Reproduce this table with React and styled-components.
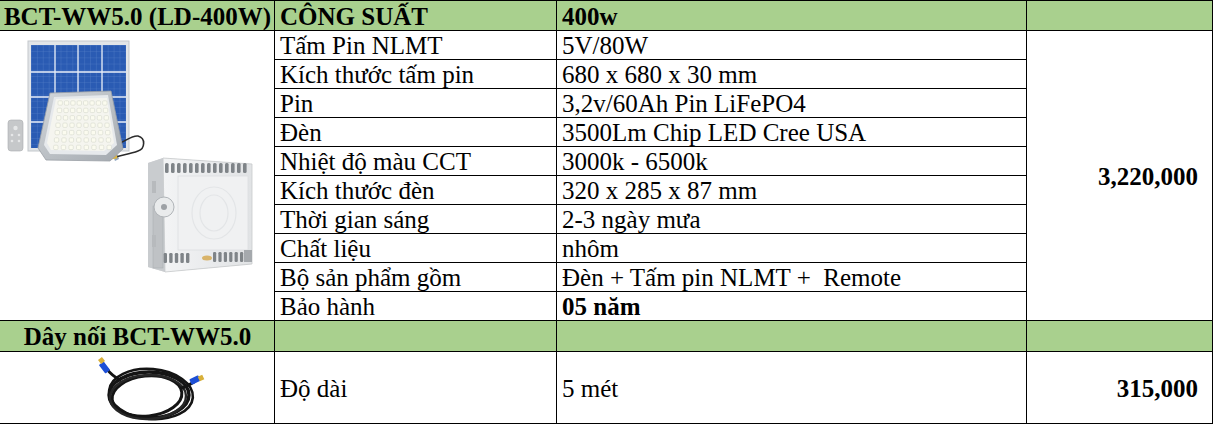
import React from "react";
import styled, { createGlobalStyle } from "styled-components";

const GlobalStyle = createGlobalStyle`
  html, body { margin: 0; padding: 0; background: #fff; }
  body { font-family: "Liberation Serif", "Times New Roman", serif; color: #000; }
`;

const Sheet = styled.div`
  display: grid;
  width: 1213px;
  grid-template-columns: 275px 282px 470px 186px;
  grid-template-rows: 30px repeat(10, 29px) 31px 72px;
  border-top: 1px solid #000;
`;

const justify = { left: "flex-start", center: "center", right: "flex-end" };

const Cell = styled.div`
  box-sizing: border-box;
  display: flex;
  align-items: center;
  justify-content: ${(p) => justify[p.$align || "left"]};
  padding: 1px ${(p) => (p.$align === "right" ? "14px" : "4px")} 0 5px;
  border-right: 1px solid #000;
  border-bottom: 1px solid #000;
  background: ${(p) => (p.$green ? "#a9d08e" : "#fff")};
  font-size: 25px;
  line-height: 1;
  font-weight: ${(p) => (p.$bold ? 700 : 400)};
  white-space: pre;
  overflow: hidden;
  grid-row: ${(p) => p.$row || "auto"};
  grid-column: ${(p) => p.$col || "auto"};
`;

const PictureCell = styled.div`
  box-sizing: border-box;
  grid-row: ${(p) => p.$row};
  grid-column: 1;
  border-right: 1px solid #000;
  border-bottom: 1px solid #000;
  overflow: hidden;
`;

const Drawing = styled.svg`
  display: block;
  width: 274px;
  height: ${(p) => p.$h}px;
`;

const Strong = styled.span`
  font-weight: 700;
`;

function SolarKit() {
  const dots = [];
  for (let r = 0; r < 7; r++) {
    for (let c = 0; c < 8; c++) {
      const t = r / 6;
      const x0 = 57 - t * 5;
      const x1 = 108 + t * 5;
      const x = x0 + ((x1 - x0) * (c + 0.5)) / 8;
      const y = 72 + r * 7.4;
      dots.push(<rect key={`${r}-${c}`} x={x - 2.2} y={y - 2.2} width={4.4} height={4.4} rx={1.1} fill="#fbfbef" stroke="#cfd2c6" strokeWidth="0.5" />);
    }
  }
  const fins = [];
  for (let i = 0; i < 14; i++) {
    fins.push(<rect key={`t${i}`} x={165 + i * 6} y={132} width={3.6} height={10} rx={1.5} fill="#7f8488" />);
  }
  const bfins = [];
  for (let i = 0; i < 6; i++) {
    bfins.push(<rect key={`b${i}`} x={158 + i * 5.6} y={222} width={3.4} height={10} rx={1.2} fill="#7f8488" />);
    bfins.push(<rect key={`c${i}`} x={213 + i * 5.4} y={221} width={3.2} height={10} rx={1.2} fill="#7f8488" />);
  }
  return (
    <Drawing viewBox="0 0 274 289" $h={289}>
      <defs>
        <pattern id="cells" width="5.9" height="6.2" patternUnits="userSpaceOnUse" x="31" y="14">
          <rect width="5.9" height="6.2" fill="#2a5bb3" />
          <path d="M0 0H5.9M0 0V6.2" stroke="#5f88cf" strokeWidth="0.5" />
        </pattern>
        <linearGradient id="body" x1="0" y1="0" x2="1" y2="1">
          <stop offset="0" stopColor="#d4d8dc" />
          <stop offset="1" stopColor="#a3a9af" />
        </linearGradient>
        <linearGradient id="back" x1="0" y1="0" x2="1" y2="0">
          <stop offset="0" stopColor="#f3f4f5" />
          <stop offset="1" stopColor="#e1e3e5" />
        </linearGradient>
      </defs>
      {/* solar panel */}
      <rect x="28" y="10" width="101" height="110" fill="#e2e5e8" stroke="#c3c7cb" strokeWidth="1" />
      <rect x="31" y="14" width="95" height="103" fill="url(#cells)" />
      <g stroke="#e8eef8" strokeWidth="1.3">
        <line x1="55" y1="14" x2="55" y2="117" />
        <line x1="78" y1="14" x2="78" y2="117" />
        <line x1="102" y1="14" x2="102" y2="117" />
        <line x1="31" y1="41" x2="126" y2="41" />
        <line x1="31" y1="66" x2="126" y2="66" />
        <line x1="31" y1="91" x2="126" y2="91" />
      </g>
      {/* bracket leg */}
      <path d="M107 96 L119 128 L115 130 L104 100 Z" fill="#8fa6c0" />
      {/* cable */}
      <path d="M116 114 C126 110 132 104 138 105 C146 107 145 118 138 120 C130 123 122 124 116 126" fill="none" stroke="#2b2b2b" strokeWidth="1.6" />
      <rect x="109" y="123" width="8" height="5" fill="#e0b53a" transform="rotate(-10 113 125)" />
      {/* floodlight front */}
      <path d="M50 62 L111 60 L123 118 L110 130 L46 129 L38 117 Z" fill="url(#body)" stroke="#9aa0a6" strokeWidth="0.8" />
      <path d="M54 66 L108 64 L117 114 L106 124 L50 123 L44 114 Z" fill="#e6e9ec" />
      <path d="M56 68 L107 67 L114 112 L104 120 L51 119 L47 112 Z" fill="#f5f5ef" />
      {dots}
      {/* remote */}
      <rect x="8" y="89" width="15" height="31" rx="3" fill="#c6c8ca" stroke="#a9acaf" strokeWidth="0.6" />
      <circle cx="15.5" cy="97" r="2.2" fill="#e6e7e8" />
      <circle cx="12" cy="104" r="1.3" fill="#e6e7e8" />
      <circle cx="19" cy="104" r="1.3" fill="#e6e7e8" />
      <circle cx="12" cy="110" r="1.3" fill="#e6e7e8" />
      <circle cx="19" cy="110" r="1.3" fill="#e6e7e8" />
      {/* back floodlight */}
      <path d="M148 132 L163 127 L252 133 L252 233 L165 241 L148 236 Z" fill="#d6d8da" />
      <path d="M163 127 L252 133 L252 233 L165 241 Z" fill="url(#back)" stroke="#c8cacc" strokeWidth="0.8" />
      <path d="M148 132 L163 127 L165 241 L148 236 Z" fill="#c9cccf" />
      {fins}
      <rect x="178" y="145" width="70" height="74" fill="#f0f1f2" stroke="#dcdee0" strokeWidth="0.8" />
      <ellipse cx="214" cy="182" rx="22" ry="26" fill="none" stroke="#e3e5e7" strokeWidth="1.2" />
      <ellipse cx="214" cy="182" rx="14" ry="18" fill="none" stroke="#e3e5e7" strokeWidth="1.2" />
      {bfins}
      <rect x="244" y="219" width="8" height="12" fill="#a5a9ad" />
      <ellipse cx="207" cy="227" rx="5" ry="2.5" fill="#d9b46a" />
      <rect x="153" y="175" width="10" height="62" fill="#bfc2c5" stroke="#a7abae" strokeWidth="0.5" />
      <circle cx="164" cy="176" r="10" fill="#e9ebec" stroke="#b0b4b8" strokeWidth="1" />
      <circle cx="164" cy="176" r="3" fill="#9da1a5" />
      <rect x="152" y="150" width="4" height="12" fill="#b7babd" />
      <rect x="152" y="204" width="4" height="12" fill="#b7babd" />
    </Drawing>
  );
}

function Cable() {
  return (
    <Drawing viewBox="0 0 274 71" $h={71}>
      <g fill="none" stroke="#141414" strokeLinecap="round">
        <ellipse cx="149" cy="43" rx="40" ry="23" strokeWidth="3.4" />
        <ellipse cx="147" cy="44" rx="35" ry="20" strokeWidth="3" transform="rotate(-6 147 44)" />
        <ellipse cx="151" cy="42" rx="42" ry="25" strokeWidth="2.6" transform="rotate(5 151 42)" />
        <ellipse cx="148" cy="45" rx="38" ry="22" strokeWidth="2.4" stroke="#262626" transform="rotate(-2 148 45)" />
        <path d="M120 28 C113 24 109 20 107 17" strokeWidth="3" />
        <path d="M182 36 C187 34 191 32 194 30" strokeWidth="3" />
      </g>
      <rect x="101.5" y="10" width="6" height="11" rx="1" fill="#1d4fd6" transform="rotate(-38 104.5 15.5)" />
      <rect x="99" y="6" width="5" height="5" fill="#d8b03a" transform="rotate(-38 101.5 8.5)" />
      <rect x="190" y="25" width="10" height="6" rx="1" fill="#1d4fd6" transform="rotate(-25 195 28)" />
      <rect x="198.5" y="23.5" width="5" height="5" fill="#d8b03a" transform="rotate(-25 201 26)" />
    </Drawing>
  );
}

const specs = [
  ["Tấm Pin NLMT", "5V/80W"],
  ["Kích thước tấm pin", "680 x 680 x 30 mm"],
  ["Pin", "3,2v/60Ah Pin LiFePO4"],
  ["Đèn", "3500Lm Chip LED Cree USA"],
  ["Nhiệt độ màu CCT", "3000k - 6500k"],
  ["Kích thước đèn", "320 x 285 x 87 mm"],
  ["Thời gian sáng", "2-3 ngày mưa"],
  ["Chất liệu", "nhôm"],
  ["Bộ sản phẩm gồm", "Đèn + Tấm pin NLMT +  Remote"],
  ["Bảo hành", <Strong key="b">05 năm</Strong>],
];

export default function App() {
  return (
    <>
      <GlobalStyle />
      <Sheet>
        <Cell $green $bold $align="center" $row="1" $col="1">BCT-WW5.0 (LD-400W)</Cell>
        <Cell $green $bold $row="1" $col="2">CÔNG SUẤT</Cell>
        <Cell $green $bold $row="1" $col="3">400w</Cell>
        <Cell $green $row="1" $col="4" />

        <PictureCell $row="2 / span 10">
          <SolarKit />
        </PictureCell>
        {specs.map(([k, v], i) => (
          <React.Fragment key={i}>
            <Cell $row={`${i + 2}`} $col="2">{k}</Cell>
            <Cell $row={`${i + 2}`} $col="3">{v}</Cell>
          </React.Fragment>
        ))}
        <Cell $bold $align="right" $row="2 / span 10" $col="4">3,220,000</Cell>

        <Cell $green $bold $align="center" $row="12" $col="1">Dây nối BCT-WW5.0</Cell>
        <Cell $green $row="12" $col="2" />
        <Cell $green $row="12" $col="3" />
        <Cell $green $row="12" $col="4" />

        <PictureCell $row="13">
          <Cable />
        </PictureCell>
        <Cell $row="13" $col="2">Độ dài</Cell>
        <Cell $row="13" $col="3">5 mét</Cell>
        <Cell $bold $align="right" $row="13" $col="4">315,000</Cell>
      </Sheet>
    </>
  );
}
